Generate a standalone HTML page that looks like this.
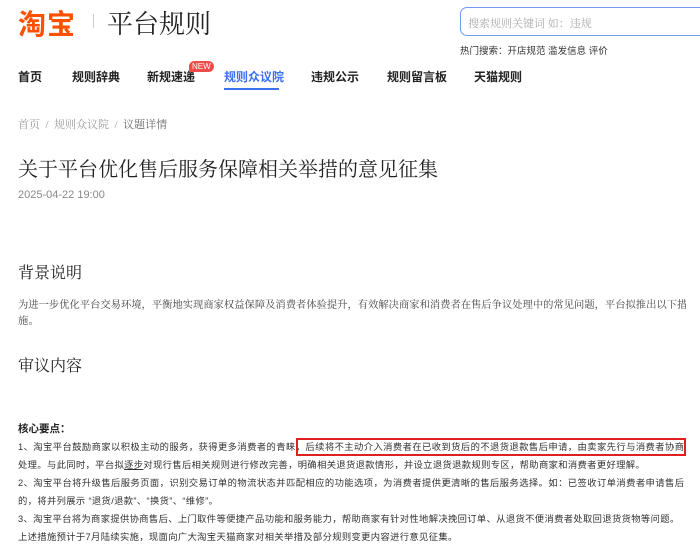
<!DOCTYPE html>
<html><head><meta charset="utf-8"><style>
body{margin:0;width:700px;height:548px;overflow:hidden;background:#fff;font-family:"Liberation Sans","Noto Sans CJK SC",sans-serif;position:relative;color:#333}
.a{position:absolute;white-space:nowrap}
.serif{font-family:"Liberation Serif","Noto Serif CJK SC",serif}
.j{position:absolute;left:18px;width:666px;font-size:9.3px;color:#333;text-align:justify;text-align-last:justify;white-space:nowrap;height:18px;line-height:18px;overflow:hidden}
.l{position:absolute;left:18px;font-size:9.3px;color:#333;white-space:nowrap;line-height:18px;letter-spacing:0.35px}
</style></head><body>
<div class="a" style="left:18px;top:3px;font-size:28px;font-weight:bold;color:#ff5000;letter-spacing:1px">淘宝</div>
<div class="a" style="left:93px;top:14px;width:1px;height:14px;background:#ccc"></div>
<div class="a serif" style="left:107px;top:4px;font-size:26px;color:#222">平台规则</div>
<div class="a" style="left:460px;top:7px;width:250px;height:29px;border:1.5px solid #6f9cf0;border-radius:7px;box-sizing:border-box"></div>
<div class="a serif" style="left:468px;top:15px;font-size:11px;color:#aaa">搜索规则关键词 如：违规</div>
<div class="a" style="left:460px;top:43px;font-size:9.5px;color:#333">热门搜索：开店规范 滥发信息 评价</div>
<div class="a" style="left:18px;top:68px;font-size:12px;font-weight:bold;color:#222">首页</div>
<div class="a" style="left:72px;top:68px;font-size:12px;font-weight:bold;color:#222">规则辞典</div>
<div class="a" style="left:147px;top:68px;font-size:12px;font-weight:bold;color:#222">新规速递</div>
<div class="a" style="left:189px;top:61px;background:#f04b4b;color:#fff;font-size:8px;padding:1px 3px;border-radius:6px 6px 6px 0">NEW</div>
<div class="a" style="left:224px;top:68px;font-size:12px;font-weight:bold;color:#3a6ff0">规则众议院</div>
<div class="a" style="left:224px;top:88px;width:55px;height:2px;background:#3a6ff0"></div>
<div class="a" style="left:311px;top:68px;font-size:12px;font-weight:bold;color:#222">违规公示</div>
<div class="a" style="left:387px;top:68px;font-size:12px;font-weight:bold;color:#222">规则留言板</div>
<div class="a" style="left:474px;top:68px;font-size:12px;font-weight:bold;color:#222">天猫规则</div>
<div class="a serif" style="left:18px;top:116px;font-size:11px;color:#999">首页 &nbsp;/ &nbsp;规则众议院 &nbsp;/ &nbsp;<span style="color:#666">议题详情</span></div>
<div class="a serif" style="left:18px;top:153px;font-size:20px;color:#222">关于平台优化售后服务保障相关举措的意见征集</div>
<div class="a" style="left:18px;top:189px;font-size:11px;color:#888">2025-04-22 19:00</div>
<div class="a serif" style="left:18px;top:260px;font-size:16px;color:#222">背景说明</div>
<div class="j serif" style="top:297px;font-size:10.3px;color:#444;width:668px">为进一步优化平台交易环境，平衡地实现商家权益保障及消费者体验提升，有效解决商家和消费者在售后争议处理中的常见问题，平台拟推出以下措</div>
<div class="l serif" style="top:313px;font-size:10.3px;color:#444">施。</div>
<div class="a serif" style="left:18px;top:353px;font-size:16px;color:#222">审议内容</div>
<div class="a" style="left:18px;top:421px;font-size:10.5px;font-weight:bold;color:#222">核心要点：</div>
<div class="j" style="top:438px">1、淘宝平台鼓励商家以积极主动的服务，获得更多消费者的青睐，后续将不主动介入消费者在已收到货后的不退货退款售后申请，由卖家先行与消费者协商</div>
<div class="l" style="top:456px">处理。与此同时，平台拟<u>逐步</u>对现行售后相关规则进行修改完善，明确相关退货退款情形，并设立退货退款规则专区，帮助商家和消费者更好理解。</div>
<div class="j" style="top:474px">2、淘宝平台将升级售后服务页面，识别交易订单的物流状态并匹配相应的功能选项，为消费者提供更清晰的售后服务选择。如：已签收订单消费者申请售后</div>
<div class="l" style="top:492px">的，将并列展示 “退货/退款”、“换货”、“维修”。</div>
<div class="l" style="top:510px">3、淘宝平台将为商家提供协商售后、上门取件等便捷产品功能和服务能力，帮助商家有针对性地解决挽回订单、从退货不便消费者处取回退货货物等问题。</div>
<div class="l" style="top:528px">上述措施预计于7月陆续实施，现面向广大淘宝天猫商家对相关举措及部分规则变更内容进行意见征集。</div>
<div class="a" style="left:296px;top:438px;width:390px;height:18px;border:2px solid #e02020;box-sizing:border-box"></div>
</body></html>
